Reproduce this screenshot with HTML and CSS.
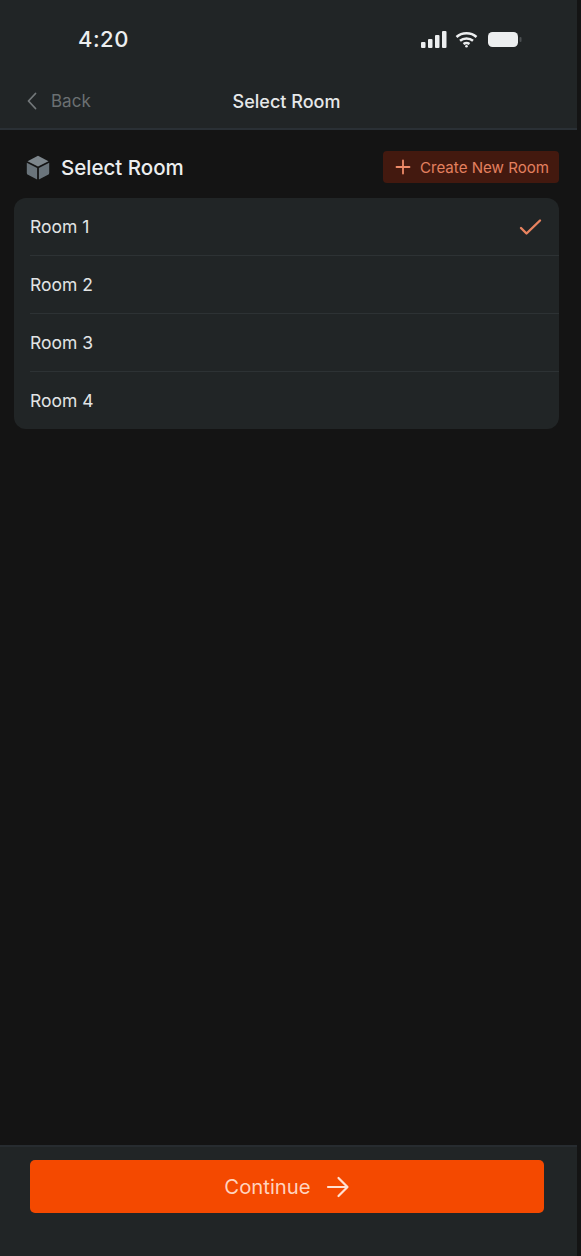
FILE: index.html
```html
<!DOCTYPE html>
<html lang="en">
<head>
    <meta charset="UTF-8" />
    <meta name="viewport" content="width=device-width, initial-scale=1.0" />
    <title>Select Room</title>
    <link rel="stylesheet" href="styles.css">
</head>
<body>
    <div class="screen">
        <div class="header">
            <div class="status-bar">
                <span class="time">4:20</span>
                <div class="status-icons">
                    <svg class="icon-signal" width="26" height="17" viewBox="0 0 26 17" fill="#eceeef">
                        <rect x="0" y="11" width="4.5" height="6" rx="1" />
                        <rect x="7" y="8" width="4.5" height="9" rx="1" />
                        <rect x="14" y="4" width="4.500" height="13" rx="1" />
                        <rect x="21" y="0" width="4.500" height="17" rx="1" />
                    </svg>
                    <svg class="icon-wifi" width="23" height="17" viewBox="0 0 23 17" fill="none" stroke="#eceeef" stroke-width="2.500">
                        <path d="M1.500 6C7 1 16 1 21.500 6" />
                        <path d="M5 9.800C8.500 6.800 14.500 6.800 18 9.800" />
                        <path d="M8.500 13C10.200 11.800 12.800 11.800 14.500 13" />
                        <circle cx="11.500" cy="15.200" r="1.300" fill="#eceeef" stroke="none" />
                    </svg>
                    <svg class="icon-battery" width="34" height="17" viewBox="0 0 34 17">
                        <rect x="0" y="1" width="30" height="15" rx="4.500" fill="#eceeef" />
                        <rect x="31.500" y="6" width="2" height="5" rx="1" fill="#4c5052" />
                    </svg>
                </div>
            </div>
            <div class="nav-bar">
                <div class="back">
                    <svg width="12" height="18" viewBox="0 0 12 18" fill="none" stroke="#73787a" stroke-width="1.800" stroke-linecap="round" stroke-linejoin="round">
                        <path d="M9.500 1.500L2.500 9l7 7.500" />
                    </svg>
                    <span>Back</span>
                </div>
                <div class="nav-title">Select Room</div>
            </div>
        </div>

        <div class="content">
            <div class="section-head">
                <div class="section-title">
                    <svg width="24" height="25" viewBox="0 0 24 25">
                        <path d="M12 .8l10.500 5.400L12 11.600 1.500 6.200z" fill="#7d868c" />
                        <path d="M.8 7.800l10.300 5.300v11.400L2 19.800c-.8-.4-1.200-1-1.200-1.900z" fill="#6a747b" />
                        <path d="M23.200 7.800l-10.300 5.300v11.400l9.100-4.700c.8-.4 1.200-1 1.200-1.900z" fill="#6a747b" />
                    </svg>
                    <span>Select Room</span>
                </div>
                <div class="create-btn">
                    <svg width="16" height="16" viewBox="0 0 16 16" fill="none" stroke="#ee8a68" stroke-width="1.800" stroke-linecap="round">
                        <path d="M8 1.500v13M1.500 8h13" />
                    </svg>
                    <span>Create New Room</span>
                </div>
            </div>

            <div class="room-list">
                <div class="room-row">
                    <span>Room 1</span>
                    <svg width="24" height="18" viewBox="0 0 24 18" fill="none" stroke="#e8835f" stroke-width="2.400" stroke-linecap="round" stroke-linejoin="round">
                        <path d="M3 10l5.500 5.500L22 2.500" />
                    </svg>
                </div>
                <div class="room-row"><span>Room 2</span></div>
                <div class="room-row"><span>Room 3</span></div>
                <div class="room-row"><span>Room 4</span></div>
            </div>
        </div>

        <div class="footer">
            <div class="continue-btn">
                <span>Continue</span>
                <svg width="24" height="22" viewBox="0 0 24 22" fill="none" stroke="#ffe0d2" stroke-width="2.200" stroke-linecap="round" stroke-linejoin="round">
                    <path d="M2 11h19M12.500 2l9 9-9 9" />
                </svg>
            </div>
        </div>
    </div>
</body>
</html>
```
FILE: styles.css
```css
html, body {
    height: 100%;
}
body {
    font-family: "Inter", "Liberation Sans", sans-serif;
    background-color: #141414;
    margin: 0;
    overflow: hidden;
}
.screen {
    width: 577px;
    height: 1256px;
    display: flex;
    flex-direction: column;
}
.header {
    background-color: #212526;
    border-bottom: 2px solid #2a3035;
    height: 128px;
    flex-shrink: 0;
}
.status-bar {
    height: 78px;
    display: flex;
    justify-content: space-between;
    align-items: center;
    padding: 0 55px 0 78px;
}
.time {
    color: #eceeef;
    font-size: 22px;
    font-weight: 500;
    letter-spacing: 0.5px;
}
.status-icons {
    display: flex;
    align-items: center;
    gap: 8px;
}
.icon-battery {
    margin-left: 2px;
}
.nav-bar {
    height: 46px;
    display: flex;
    align-items: center;
    justify-content: center;
    position: relative;
}
.back {
    position: absolute;
    left: 26px;
    top: 0;
    height: 46px;
    display: flex;
    align-items: center;
    gap: 13px;
    color: #6b7072;
    font-size: 17px;
}
.nav-title {
    color: #e6e8e9;
    font-size: 18px;
    font-weight: 500;
    margin-left: -4px;
}
.content {
    flex: 1;
    padding: 21px 18px 0 14px;
}
.section-head {
    display: flex;
    justify-content: space-between;
    align-items: center;
    height: 32px;
    margin-bottom: 15px;
}
.section-title {
    display: flex;
    align-items: center;
    gap: 11px;
    padding-left: 12px;
    color: #eceeef;
    font-size: 20.500px;
    font-weight: 500;
}
.create-btn {
    display: flex;
    align-items: center;
    gap: 9px;
    height: 32px;
    box-sizing: border-box;
    padding: 0 10px 0 12px;
    background-color: #43190f;
    border-radius: 4px;
    color: #e3805f;
    font-size: 15.100px;
}
.room-list {
    background-color: #212526;
    border-radius: 12px;
    padding-left: 16px;
}
.room-row {
    height: 58px;
    box-sizing: border-box;
    display: flex;
    align-items: center;
    justify-content: space-between;
    padding-right: 17px;
    border-bottom: 1px solid #2d3234;
    color: #e2e4e5;
    font-size: 17.500px;
}
.room-row:last-child {
    height: 57px;
    border-bottom: none;
}
.footer {
    height: 111px;
    box-sizing: border-box;
    flex-shrink: 0;
    background-color: #212526;
    border-top: 2px solid #272c30;
    padding: 13px 33px 0 30px;
}
.continue-btn {
    height: 53px;
    display: flex;
    align-items: center;
    justify-content: center;
    gap: 15px;
    background-color: #f44900;
    border-radius: 5px;
    color: #ffd3bf;
    font-size: 20.300px;
}
```
